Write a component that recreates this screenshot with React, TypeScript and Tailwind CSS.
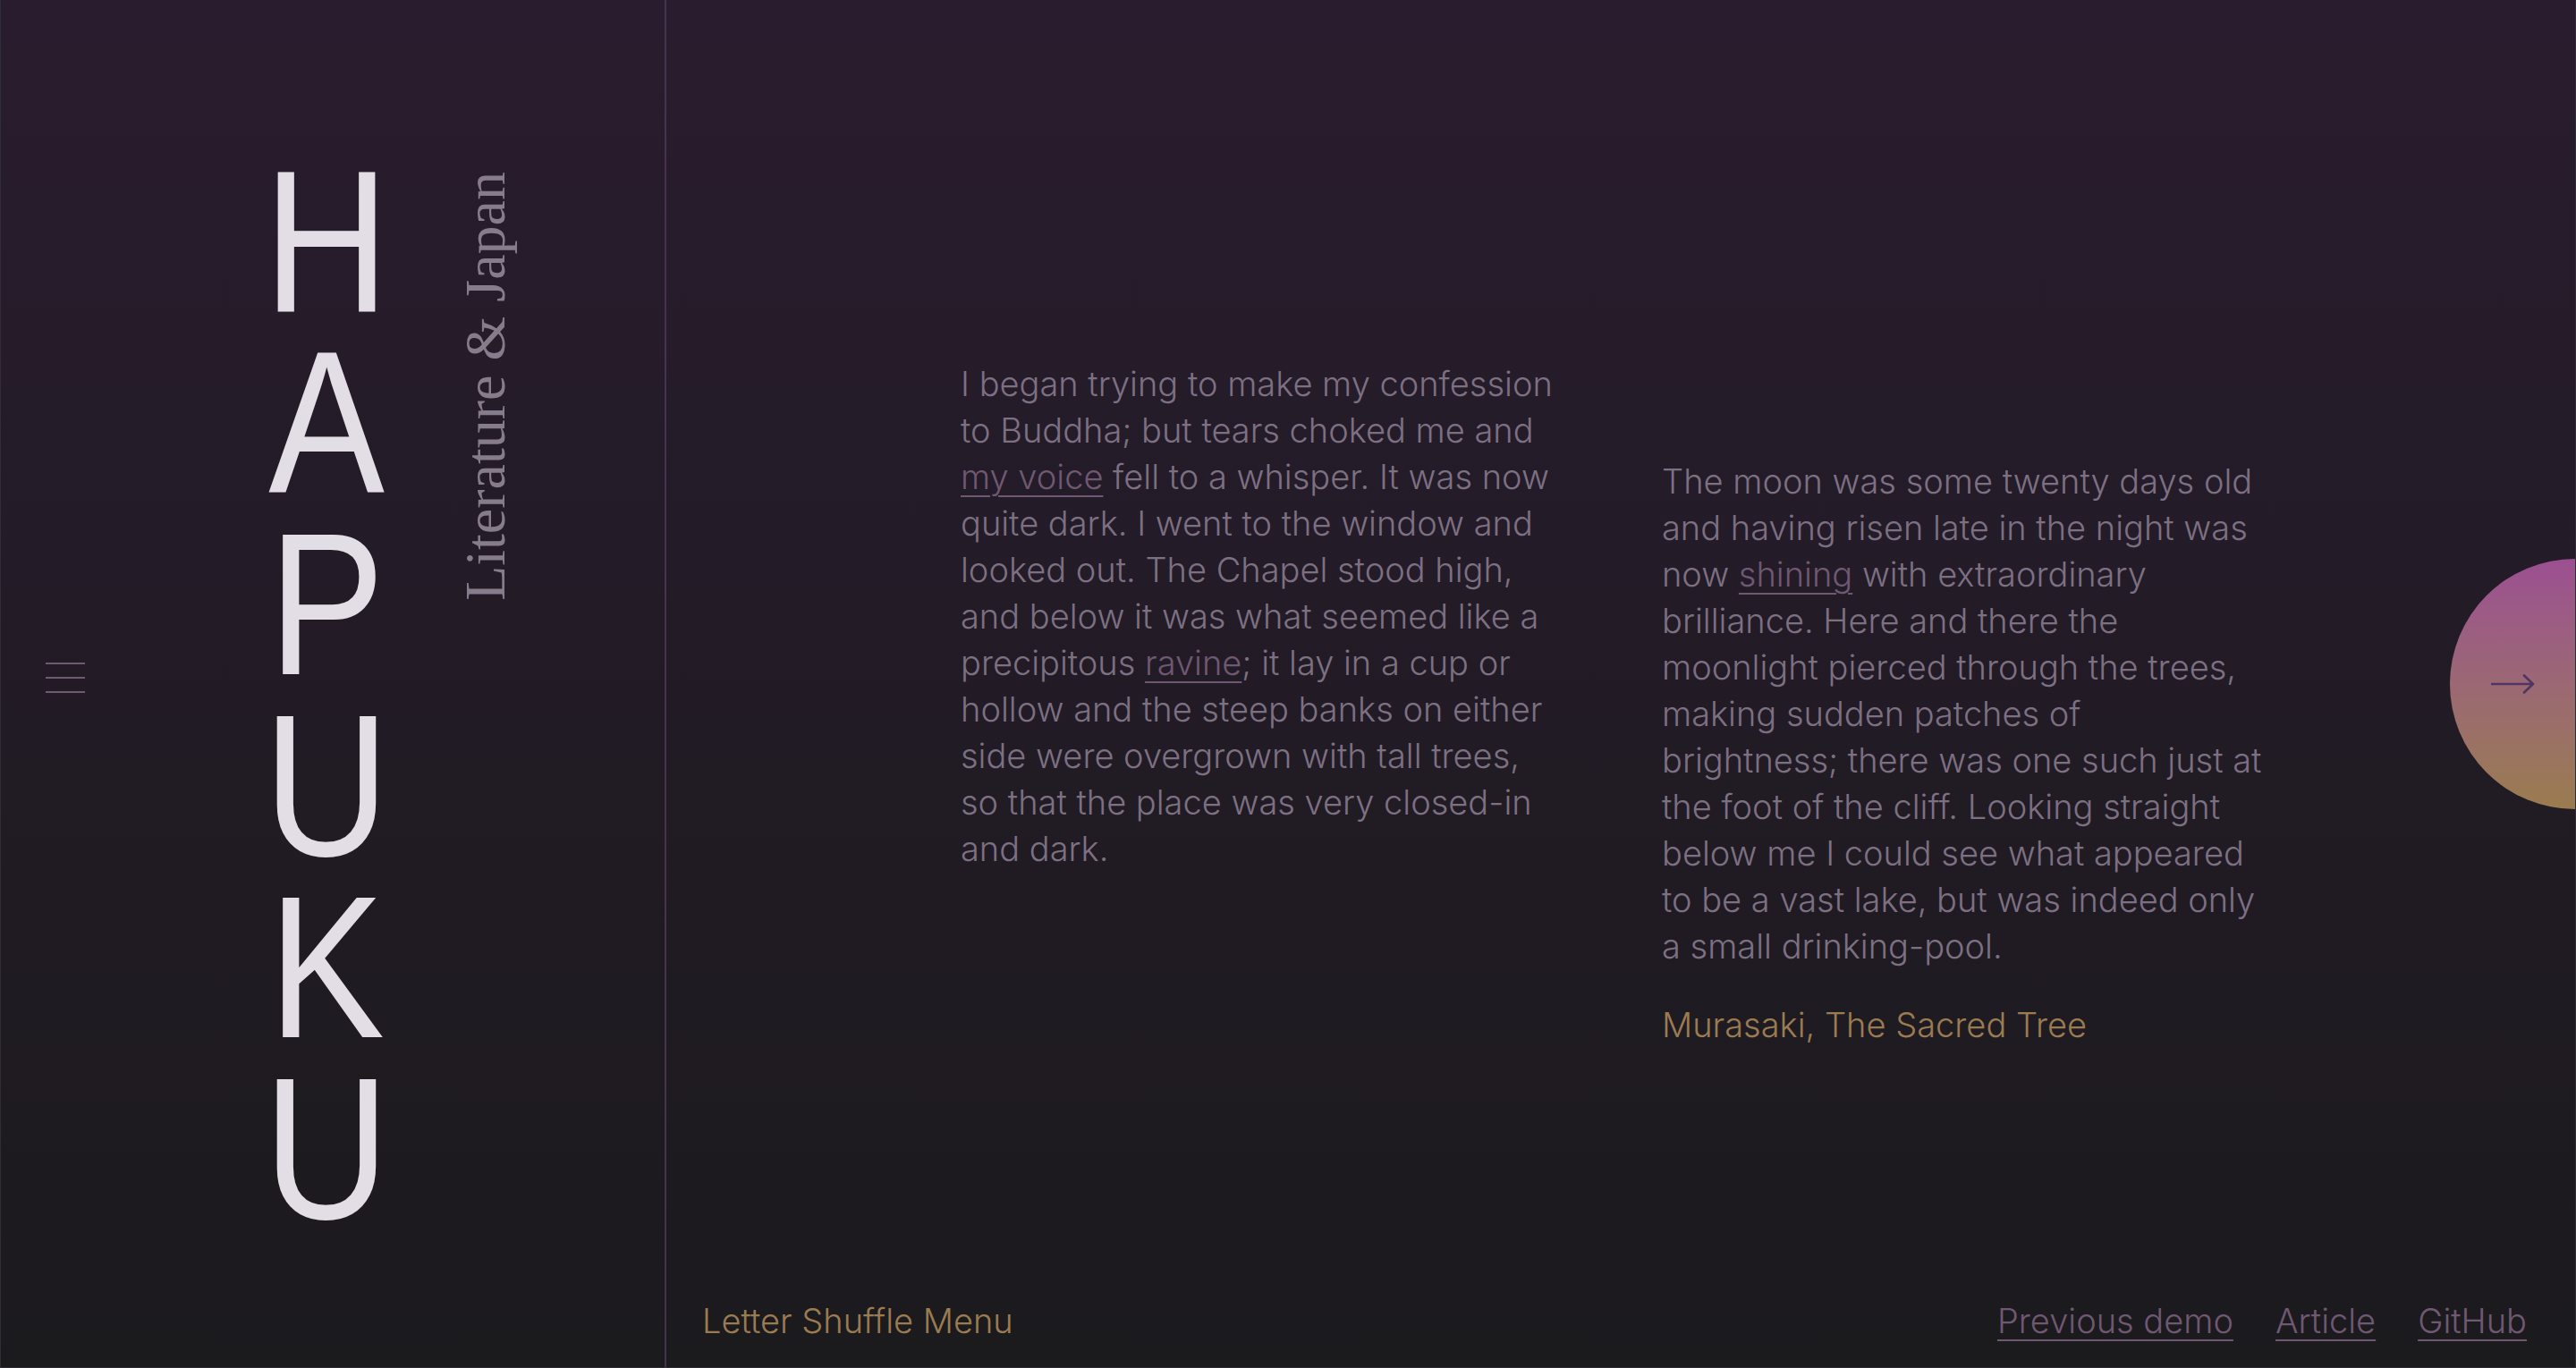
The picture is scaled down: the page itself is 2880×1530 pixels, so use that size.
import React from 'react';

const sans = "font-['Inter','Liberation_Sans',sans-serif]";

const Hamburger = () => (
  <button className="mt-[741px] ml-[50px] flex w-[44px] shrink-0 flex-col gap-[14px] self-start">
    <span className="block h-[2px] w-full bg-[#6e5a72]" />
    <span className="block h-[2px] w-full bg-[#6e5a72]" />
    <span className="block h-[2px] w-full bg-[#6e5a72]" />
  </button>
);

const NextButton = () => (
  <button className="absolute top-1/2 right-[-140px] flex h-[280px] w-[280px] -translate-y-1/2 items-center rounded-full bg-linear-to-b from-[#9c4f91] to-[#9a7c4e] pl-[46px]">
    <svg width="50" height="26" viewBox="0 0 50 26" fill="none">
      <path d="M1 13 H47 M37 3.5 L47 13 L37 22.5" stroke="#4f3660" strokeWidth="2.6" strokeLinecap="round" strokeLinejoin="round" />
    </svg>
  </button>
);

const Link = ({ children }: { children: React.ReactNode }) => (
  <a href="#" className="text-[#6f5872] underline decoration-[#6f5872] decoration-[1.5px] underline-offset-[7px]">
    {children}
  </a>
);

export default function App() {
  return (
    <div className={`flex h-screen w-full overflow-hidden border-x border-b border-[#2f2e34] bg-linear-to-b from-[#291c2e] to-[#1b1a1d] font-light ${sans}`}>
      {/* Side panel */}
      <aside className="flex w-[744px] shrink-0 items-start border-r-2 border-[#46334e]">
        <Hamburger />

        <h1 className="mt-[168px] ml-[190px] flex w-[160px] shrink-0 scale-x-[0.86] flex-col items-center font-['Liberation_Sans',Arial,sans-serif] text-[226px] leading-[203px] font-normal text-[#e3dee5]">
          {'HAPUKU'.split('').map((l, i) => (
            <span key={i} className="block h-[203px]">{l}</span>
          ))}
        </h1>

        <p className="mt-[192px] ml-[66px] rotate-180 font-['Liberation_Serif','DejaVu_Serif',serif] text-[64px] leading-[64px] font-normal whitespace-nowrap text-[#877c8b] [writing-mode:vertical-rl]">
          Literature &amp; Japan
        </p>
      </aside>

      {/* Main */}
      <main className="relative flex flex-1 flex-col">
        <div className="flex flex-1 items-start pl-[329px] text-[38px] leading-[52px] text-[#7d7083]">
          <p className="mt-[403px] w-[700px] whitespace-nowrap">
            I began trying to make my confession<br />
            to Buddha; but tears choked me and<br />
            <Link>my voice</Link> fell to a whisper. It was now<br />
            quite dark. I went to the window and<br />
            looked out. The Chapel stood high,<br />
            and below it was what seemed like a<br />
            precipitous <Link>ravine</Link>; it lay in a cup or<br />
            hollow and the steep banks on either<br />
            side were overgrown with tall trees,<br />
            so that the place was very closed-in<br />
            and dark.
          </p>

          <div className="mt-[512px] ml-[84px] flex flex-col gap-[36px]">
            <p className="whitespace-nowrap">
              The moon was some twenty days old<br />
              and having risen late in the night was<br />
              now <Link>shining</Link> with extraordinary<br />
              brilliance. Here and there the<br />
              moonlight pierced through the trees,<br />
              making sudden patches of<br />
              brightness; there was one such just at<br />
              the foot of the cliff. Looking straight<br />
              below me I could see what appeared<br />
              to be a vast lake, but was indeed only<br />
              a small drinking-pool.
            </p>
            <p className="text-[#9b7c52]">Murasaki, The Sacred Tree</p>
          </div>
        </div>

        <footer className="flex items-center justify-between pr-[54px] pb-[26px] pl-[40px] text-[38px] leading-[52px]">
          <span className="text-[#9b7c52]">Letter Shuffle Menu</span>
          <nav className="flex gap-[47px]">
            <Link>Previous demo</Link>
            <Link>Article</Link>
            <Link>GitHub</Link>
          </nav>
        </footer>

        <NextButton />
      </main>
    </div>
  );
}
